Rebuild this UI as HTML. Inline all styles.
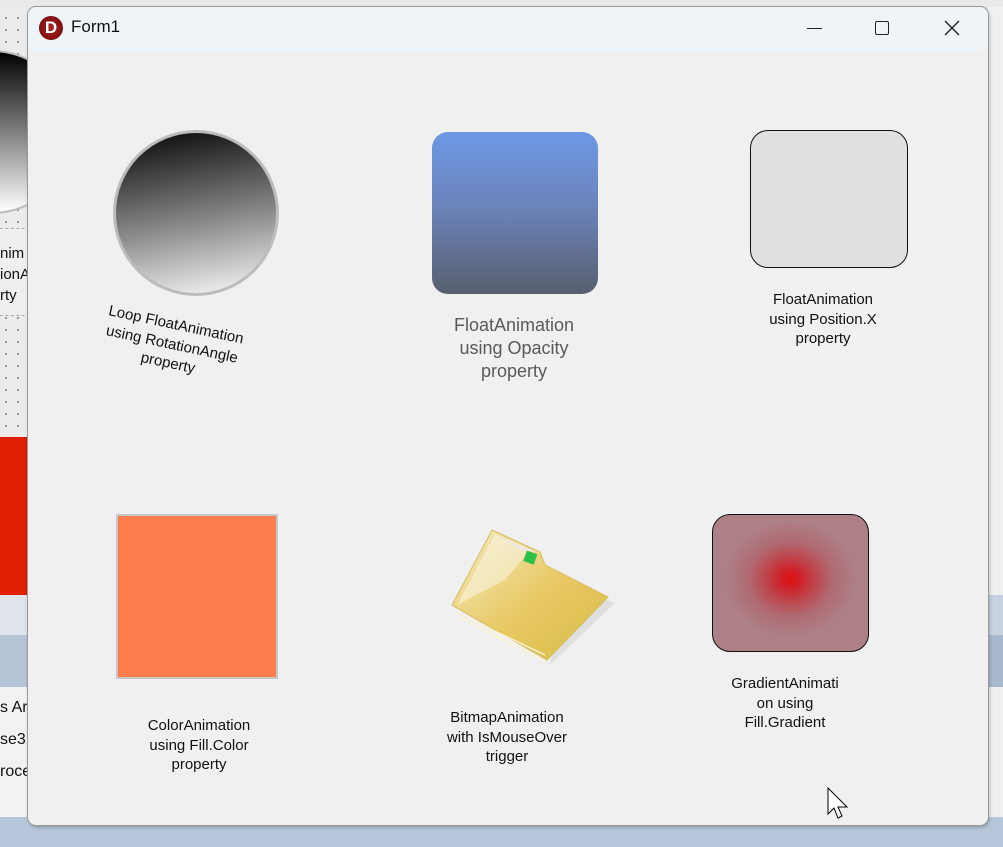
<!DOCTYPE html>
<html><head><meta charset="utf-8"><style>
body{margin:0;width:1003px;height:847px;overflow:hidden;position:relative;background:#e6e6e6;font-family:"Segoe UI","Liberation Sans",sans-serif}
.a{position:absolute}
.lbl{position:absolute;text-align:center;font-size:15px;line-height:19.5px;color:#111}
</style></head><body>
<div class="a" style="left:0;top:0;width:30px;height:437px;background-color:#ececec;background-image:radial-gradient(#888 0.8px,transparent 1.2px);background-size:12px 12px"></div>
<div class="a" style="left:-90px;top:50px;width:160px;height:160px;border-radius:50%;background:linear-gradient(#000,#fff);border:2px solid #bbb"></div>
<div class="a" style="left:0;top:228px;width:30px;height:86px;background:#efefef;border-top:1px dashed #aaa;border-bottom:1px dashed #aaa"></div>
<div class="a" style="left:0;top:243px;font-size:15px;line-height:21px;color:#111">nim<br>ionA<br>rty</div>
<div class="a" style="left:0;top:437px;width:30px;height:158px;background:#e01e00"></div>
<div class="a" style="left:0;top:595px;width:30px;height:40px;background:#dfe3ea"></div>
<div class="a" style="left:0;top:635px;width:30px;height:52px;background:#b5c4d6"></div>
<div class="a" style="left:0;top:687px;width:30px;height:130px;background:#f2f2f2"></div>
<div class="a" style="left:0;top:692px;font-size:16px;line-height:32px;color:#111">s Ar<br>se3<br>roce</div>
<div class="a" style="left:0;top:817px;width:1003px;height:30px;background:#b7c7db"></div>
<div class="a" style="left:988px;top:0;width:15px;height:817px;background:#f0f0f0"></div>
<div class="a" style="left:988px;top:595px;width:15px;height:40px;background:#c7d3e2"></div>
<div class="a" style="left:988px;top:635px;width:15px;height:52px;background:#a8b9ce"></div>
<div class="a" style="left:0;top:0;width:1003px;height:7px;background:#e9e9e9"></div>
<div class="a" style="left:28px;top:7px;width:960px;height:818px;border-radius:8px;background:#f0f0f0;box-shadow:0 0 0 1px #9a9a9a,1px 2px 4px rgba(0,0,0,.3);overflow:hidden">
 <div class="a" style="left:0;top:0;width:960px;height:44px;background:#eff4f9"></div>
 <div class="a" style="left:11px;top:9px;width:24px;height:24px;border-radius:50%;background:radial-gradient(#b02020,#6a0a0a)"></div>
 <div class="a" style="left:11px;top:9px;width:24px;height:24px;color:#fff;font-weight:bold;font-size:17px;line-height:24px;text-align:center">D</div>
 <div class="a" style="left:43px;top:10px;font-size:17px;color:#111">Form1</div>
 <div class="a" style="left:779px;top:21px;width:15px;height:1px;background:#222"></div>
 <div class="a" style="left:847px;top:14px;width:12px;height:12px;border:1.3px solid #222;border-radius:2px"></div>
 <svg class="a" style="left:916px;top:13px" width="16" height="16"><path d="M1 1L15 15M15 1L1 15" stroke="#222" stroke-width="1.4"/></svg>
</div>
<div class="a" style="left:113px;top:130px;width:160px;height:160px;border-radius:50%;border:3px solid #bcbcbc;background:linear-gradient(170deg,#050505,#888 55%,#fafafa)"></div>
<div class="lbl" style="left:82px;top:315px;width:180px;transform:rotate(12deg)">Loop FloatAnimation<br>using RotationAngle<br>property</div>
<div class="a" style="left:432px;top:132px;width:166px;height:162px;border-radius:16px;background:linear-gradient(#6d98e6,#6b84bc 45%,#575f6e)"></div>
<div class="lbl" style="left:434px;top:314px;width:160px;font-size:18px;line-height:23px;color:#5a5a5a">FloatAnimation<br>using Opacity<br>property</div>
<div class="a" style="left:750px;top:130px;width:156px;height:136px;border-radius:18px;background:#e0e0e0;border:1.5px solid #111"></div>
<div class="lbl" style="left:753px;top:290px;width:140px">FloatAnimation<br>using Position.X<br>property</div>
<div class="a" style="left:116px;top:514px;width:158px;height:161px;background:#fe7d4c;border:2.5px solid #c8c8c8"></div>
<div class="lbl" style="left:129px;top:716px;width:140px">ColorAnimation<br>using Fill.Color<br>property</div>
<svg class="a" style="left:445px;top:525px" width="175" height="145">
 <defs><linearGradient id="f" x1="0" y1="0" x2="1" y2="1"><stop offset="0" stop-color="#f4ecc4"/><stop offset=".55" stop-color="#e8c862"/><stop offset="1" stop-color="#d6bc48"/></linearGradient></defs>
 <polygon points="105,140 170,78 120,60" fill="#999" opacity=".2"/>
 <polygon points="47,5 95,27 100,40 163,72 102,135 7,80" fill="url(#f)" stroke="#d6bc5a"/>
 <polygon points="50,9 85,25 60,55 12,80" fill="#faf6e6" opacity=".55"/>
 <polygon points="50,9 92,27 75,25" fill="#eeeae0"/>
 <rect x="80" y="27" width="11" height="11" fill="#2bbf4a" transform="rotate(20 85 32)"/>
 <path d="M12 88L100 130M15 93L100 136" stroke="#faf2d2" stroke-width="1.5"/>
</svg>
<div class="lbl" style="left:437px;top:708px;width:140px">BitmapAnimation<br>with IsMouseOver<br>trigger</div>
<div class="a" style="left:712px;top:514px;width:155px;height:136px;border-radius:18px;border:1.5px solid #111;background:radial-gradient(ellipse 65px 58px at 50% 47%,#e01010 0%,#d02028 15%,#c04048 35%,#b06a72 65%,#ad7f86 100%),#ad7f86"></div>
<div class="lbl" style="left:715px;top:674px;width:140px">GradientAnimati<br>on using<br>Fill.Gradient</div>
<svg class="a" style="left:827px;top:787px" width="24" height="34"><path d="M1 1L1 27L7 21L11 31L15 29L11 20L20 20Z" fill="#fff" stroke="#000" stroke-width="1"/></svg>
</body></html>
